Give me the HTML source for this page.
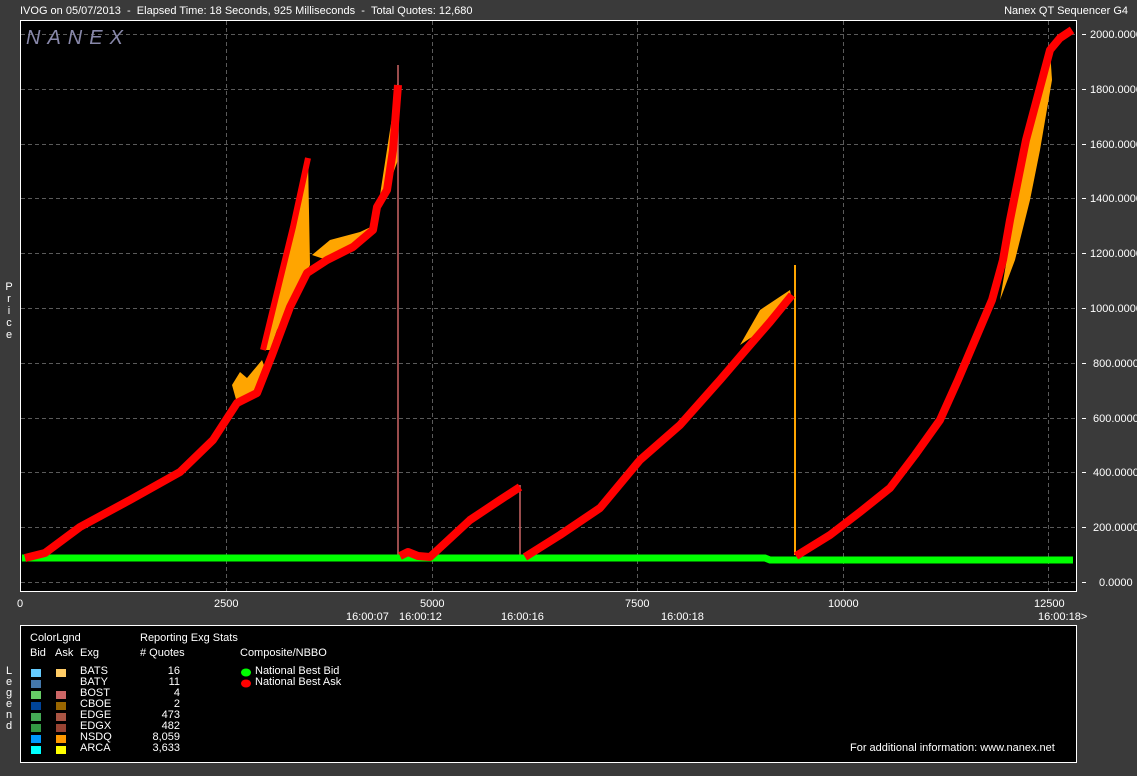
<!DOCTYPE html>
<html><head><meta charset="utf-8"><style>
body{margin:0;width:1137px;height:776px;background:#3a3a3a;font-family:"Liberation Sans",sans-serif;color:#fff;position:relative;overflow:hidden}
.t{position:absolute;font-size:11px;white-space:nowrap;line-height:12px}
.sw{position:absolute;width:10px;height:8px}
</style></head><body>
<div class="t" style="left:20px;top:5px">IVOG on 05/07/2013 &nbsp;- &nbsp;Elapsed Time: 18 Seconds, 925 Milliseconds &nbsp;- &nbsp;Total Quotes: 12,680</div>
<div class="t" style="right:9px;top:5px">Nanex QT Sequencer G4</div>
<svg width="1137" height="776" style="position:absolute;left:0;top:0">
<rect x="20.5" y="20.5" width="1056" height="571" fill="#000" stroke="#fff"/>
<g stroke="#5a5a5a" stroke-dasharray="4,3" stroke-width="1">
<line x1="21" x2="1076" y1="34.5" y2="34.5"/><line x1="21" x2="1076" y1="89.5" y2="89.5"/><line x1="21" x2="1076" y1="144.5" y2="144.5"/><line x1="21" x2="1076" y1="198.5" y2="198.5"/><line x1="21" x2="1076" y1="253.5" y2="253.5"/><line x1="21" x2="1076" y1="308.5" y2="308.5"/><line x1="21" x2="1076" y1="363.5" y2="363.5"/><line x1="21" x2="1076" y1="418.5" y2="418.5"/><line x1="21" x2="1076" y1="472.5" y2="472.5"/><line x1="21" x2="1076" y1="527.5" y2="527.5"/><line x1="21" x2="1076" y1="582.5" y2="582.5"/>
<line y1="21" y2="591" x1="226.5" x2="226.5"/><line y1="21" y2="591" x1="432.5" x2="432.5"/><line y1="21" y2="591" x1="637.5" x2="637.5"/><line y1="21" y2="591" x1="843.5" x2="843.5"/><line y1="21" y2="591" x1="1048.5" x2="1048.5"/>
</g>
<text x="26" y="44" fill="#8888aa" font-size="20" font-style="italic" font-family="Liberation Sans" letter-spacing="7">NANEX</text>
<polygon fill="#ffa500" points="263,350 280,280 293,227 308,158 310,265 290,307 277,330 270,350"/>
<polygon fill="#ffa500" points="312,255 330,240 360,232 375,225 380,195 390,130 398,80 398,160 387,190 377,207 373,230 353,247 327,260"/>
<polygon fill="#ffa500" points="232,385 240,372 247,378 262,360 267,373 257,393 237,403"/>
<polygon fill="#ffa500" points="1000,300 1010,240 1025,150 1040,90 1050,50 1052,80 1040,150 1030,200 1015,260"/>
<polygon fill="#ffa500" points="740,345 760,310 790,290 792,300 770,325"/>
<line x1="398" y1="65" x2="398" y2="555" stroke="#c66" stroke-width="1.5"/>
<line x1="520" y1="485" x2="520" y2="555" stroke="#c66" stroke-width="1.5"/>
<line x1="795" y1="265" x2="795" y2="555" stroke="#ffa500" stroke-width="2"/>
<polyline fill="none" stroke="#0f0" stroke-width="7" points="22,558 765,558 770,560 1073,560"/>
<g fill="none" stroke="#f00" stroke-width="8" stroke-linejoin="round">
<polyline points="25,558 45,553 80,527 130,500 180,472 213,440 237,403 257,393 272,355 290,307 307,273 327,260 353,247 373,230 377,207 387,190 393,150 398,85"/>
<polyline stroke-width="6" points="263,350 280,280 293,227 308,158"/>
<polyline points="400,556 408,552 418,556 430,557 470,520 500,500 520,487"/>
<polyline points="525,557 560,535 600,508 640,460 680,425 720,380 750,345 770,322 792,295"/>
<polyline points="796,556 830,535 860,512 890,488 915,455 940,420 958,380 975,340 992,300 1003,260 1010,220 1018,180 1026,140 1034,110 1042,80 1050,50 1060,38 1072,30"/>
</g>
<g fill="#fff" font-size="11" font-family="Liberation Sans">
<text x="1090" y="38">2000.0000</text><text x="1090" y="93">1800.0000</text><text x="1090" y="148">1600.0000</text><text x="1090" y="202">1400.0000</text><text x="1090" y="257">1200.0000</text><text x="1090" y="312">1000.0000</text><text x="1093" y="367">800.0000</text><text x="1093" y="422">600.0000</text><text x="1093" y="476">400.0000</text><text x="1093" y="531">200.0000</text><text x="1099" y="586">0.0000</text>
<text x="17" y="607">0</text><text x="214" y="607">2500</text><text x="420" y="607">5000</text><text x="625" y="607">7500</text><text x="828" y="607">10000</text><text x="1034" y="607">12500</text>
<text x="346" y="620">16:00:07</text><text x="399" y="620">16:00:12</text><text x="501" y="620">16:00:16</text><text x="661" y="620">16:00:18</text><text x="1038" y="620">16:00:18&gt;</text>
</g>
<g stroke="#fff"><line x1="1082" x2="1086" y1="34.5" y2="34.5"/><line x1="1082" x2="1086" y1="89.5" y2="89.5"/><line x1="1082" x2="1086" y1="144.5" y2="144.5"/><line x1="1082" x2="1086" y1="198.5" y2="198.5"/><line x1="1082" x2="1086" y1="253.5" y2="253.5"/><line x1="1082" x2="1086" y1="308.5" y2="308.5"/><line x1="1082" x2="1086" y1="363.5" y2="363.5"/><line x1="1082" x2="1086" y1="418.5" y2="418.5"/><line x1="1082" x2="1086" y1="472.5" y2="472.5"/><line x1="1082" x2="1086" y1="527.5" y2="527.5"/><line x1="1082" x2="1086" y1="582.5" y2="582.5"/></g>
<rect x="20.5" y="625.5" width="1056" height="137" fill="#000" stroke="#fff"/>
<g fill="#fff" font-size="11" font-family="Liberation Sans" text-anchor="middle">
<text x="9" y="290">P</text><text x="9" y="302">r</text><text x="9" y="314">i</text><text x="9" y="326">c</text><text x="9" y="338">e</text>
<text x="9" y="674">L</text><text x="9" y="685">e</text><text x="9" y="696">g</text><text x="9" y="707">e</text><text x="9" y="718">n</text><text x="9" y="729">d</text>
</g>
</svg>
<div class="t" style="left:30px;top:632px">ColorLgnd</div>
<div class="t" style="left:140px;top:632px">Reporting Exg Stats</div>
<div class="t" style="left:30px;top:647px">Bid</div><div class="t" style="left:55px;top:647px">Ask</div><div class="t" style="left:80px;top:647px">Exg</div>
<div class="t" style="left:140px;top:647px"># Quotes</div><div class="t" style="left:240px;top:647px">Composite/NBBO</div>
<div class="sw" style="left:31px;top:669px;background:#66ccff"></div><div class="sw" style="left:56px;top:669px;background:#ffcc66"></div>
<div class="sw" style="left:31px;top:680px;background:#4477aa"></div>
<div class="sw" style="left:31px;top:691px;background:#66cc66"></div><div class="sw" style="left:56px;top:691px;background:#cc6666"></div>
<div class="sw" style="left:31px;top:702px;background:#004499"></div><div class="sw" style="left:56px;top:702px;background:#996600"></div>
<div class="sw" style="left:31px;top:713px;background:#44aa55"></div><div class="sw" style="left:56px;top:713px;background:#aa5544"></div>
<div class="sw" style="left:31px;top:724px;background:#339944"></div><div class="sw" style="left:56px;top:724px;background:#994433"></div>
<div class="sw" style="left:31px;top:735px;background:#0099ff"></div><div class="sw" style="left:56px;top:735px;background:#ff9900"></div>
<div class="sw" style="left:31px;top:746px;background:#00ffff"></div><div class="sw" style="left:56px;top:746px;background:#ffff00"></div>
<div class="t" style="left:80px;top:666px;line-height:11px">BATS<br>BATY<br>BOST<br>CBOE<br>EDGE<br>EDGX<br>NSDQ<br>ARCA</div>
<div class="t" style="left:140px;width:40px;text-align:right;top:666px;line-height:11px">16<br>11<br>4<br>2<br>473<br>482<br>8,059<br>3,633</div>
<svg style="position:absolute;left:240px;top:668px" width="12" height="22"><ellipse cx="6" cy="4.5" rx="5" ry="4" fill="#0f0"/><ellipse cx="6" cy="15.5" rx="5" ry="4" fill="#f00"/></svg>
<div class="t" style="left:255px;top:666px;line-height:11px">National Best Bid<br>National Best Ask</div>
<div class="t" style="left:850px;top:742px">For additional information: www.nanex.net</div>
</body></html>
